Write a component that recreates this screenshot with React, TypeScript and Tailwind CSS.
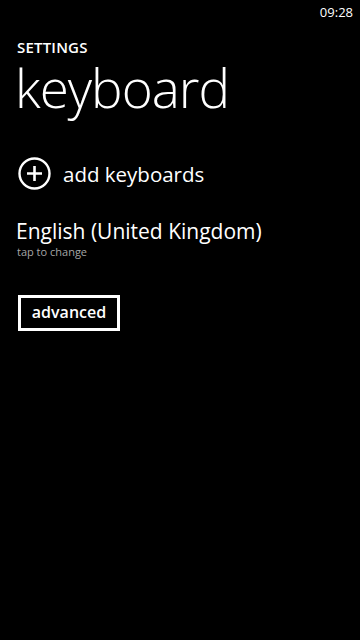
export default function App() {
  return (
    <div
      className="w-[360px] h-[640px] bg-black text-white overflow-hidden"
      style={{ fontFamily: '"Open Sans", "Noto Sans", sans-serif' }}
    >
      {/* Status bar */}
      <div className="flex justify-end pr-[7px] pt-[3px] h-[24px]">
        <span className="text-[13px] leading-[18px]">09:28</span>
      </div>

      {/* Header */}
      <div className="pl-[17px] pt-[13px]">
        <div className="text-[15px] font-semibold leading-[20px] tracking-[0.2px]">SETTINGS</div>
        <h1 className="text-[53px] font-light leading-[62px] -ml-[2px] tracking-[-1px]">keyboard</h1>
      </div>

      {/* Content */}
      <div className="pl-[18px] pt-[38px]">
        <button className="flex items-center gap-[12px] text-white">
          <svg width="33" height="33" viewBox="0 0 33 33" fill="none" stroke="white" strokeWidth="2.4">
            <circle cx="16.5" cy="16.5" r="15" />
            <path d="M16.5 9v15M9 16.5h15" strokeWidth="2.6" />
          </svg>
          <span className="text-[20.5px] leading-[30px]">add keyboards</span>
        </button>

        <div className="mt-[26px] -ml-[2px]">
          <div className="text-[21px] leading-[30px]">English (United Kingdom)</div>
          <div className="text-[11px] leading-[12px] text-[#a6a6a6] ml-[1px]">tap to change</div>
        </div>

        <button className="mt-[37px] border-[3px] border-white h-[36px] w-[102px] flex items-center justify-center">
          <span className="text-[16px] font-semibold leading-[20px] pb-[2px]">advanced</span>
        </button>
      </div>
    </div>
  );
}
